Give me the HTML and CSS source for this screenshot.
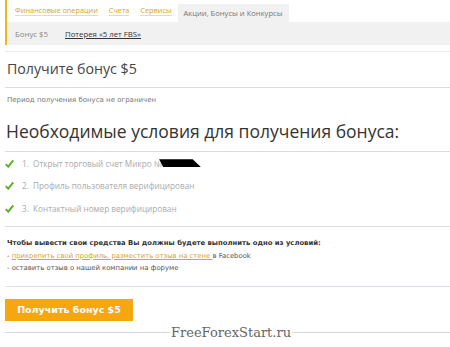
FILE: index.html
```html
<!DOCTYPE html>
<html>
<head>
  <meta charset="utf-8" />
  <title>Бонус $5</title>
  <link rel="stylesheet" href="styles.css">
</head>
<body>
<div class="page">
  <div class="nav">
    <div class="tabs">
      <a class="tab">Финансовые операции</a>
      <a class="tab">Счета</a>
      <a class="tab">Сервисы</a>
      <span class="tab active">Акции, Бонусы и Конкурсы</span>
    </div>
    <div class="subtabs">
      <span class="sub">Бонус $5</span>
      <a class="sub link">Потерея «5 лет FBS»</a>
    </div>
  </div>

  <div class="rule"></div>

  <h2 class="title">Получите бонус $5</h2>
  <p class="period">Период получения бонуса не ограничен</p>

  <h1 class="heading">Необходимые условия для получения бонуса:</h1>
  <ul class="conds">
    <li><svg class="check" viewBox="0 0 10 9"><path d="M0.8 5.2 L3.6 8 L9.2 1" /></svg>1.&nbsp;&nbsp;Открыт торговый счет Микро №<span class="redact"></span></li>
    <li><svg class="check" viewBox="0 0 10 9"><path d="M0.8 5.2 L3.6 8 L9.2 1" /></svg>2.&nbsp;&nbsp;Профиль пользователя верифицирован</li>
    <li><svg class="check" viewBox="0 0 10 9"><path d="M0.8 5.2 L3.6 8 L9.2 1" /></svg>3.&nbsp;&nbsp;Контактный номер верифицирован</li>
  </ul>

  <div class="withdraw">
    <b>Чтобы вывести свои средства Вы должны будете выполнить одно из условий:</b><br>
    - <a class="fb">прикрепить свой профиль, разместить отзыв на стене </a>в Facebook<br>
    - оставить отзыв о нашей компании на форуме
  </div>

  <div class="actions">
    <button class="btn">Получить бонус $5</button>
  </div>
  <div class="footer-rule"></div>
</div>
<div class="watermark">FreeForexStart.ru</div>
</body>
</html>
```

FILE: styles.css
```css
body {
  margin:0;
  padding:0;
  background:#fff;
  font-family:'DejaVu Sans', sans-serif;
  color:#444;
}

.page {
  padding-left:5px;
}

.nav {
  border-left:2px solid #f2b619;
}

.tabs {
  display:flex;
  align-items:flex-end;
  height:22px;
  padding-left:8px;
  gap:11px;
  font-family:'Open Sans', sans-serif;
}

.tab {
  font-size:7.3px;
  color:#d9a520;
  text-decoration:none;
  border-bottom:1px solid #f3dc8c;
  line-height:10px;
  margin-bottom:6px;
}

.tab.active {
  color:#777;
  border:0;
  background:#f1f1f1;
  margin:0;
  margin-left:-5px;
  padding:0 6px;
  height:18px;
  line-height:18px;
  font-size:7.6px;
}

.subtabs {
  display:flex;
  align-items:center;
  height:23px;
  background:#f1f1f1;
  padding-left:8px;
  gap:17px;
  font-family:'Open Sans', sans-serif;
  font-size:7.8px;
}

.sub {
  color:#888;
}

.sub.link {
  color:#333;
  text-decoration:underline;
}

.rule {
  margin-top:6px;
  border-top:1px solid #ececec;
}

h1, h2, p, ul {
  margin:0;
}

.title {
  font-family:'Open Sans', sans-serif;
  font-weight:normal;
  font-size:14.2px;
  color:#444;
  height:35px;
  line-height:34px;
  padding-left:2px;
  border-bottom:1px solid #dcdcdc;
}

.period {
  font-size:7px;
  color:#777;
  height:26px;
  line-height:25px;
  padding-left:2px;
}

.heading {
  font-family:'Open Sans', sans-serif;
  font-weight:normal;
  font-size:17.5px;
  color:#333;
  height:37px;
  line-height:34px;
  padding-left:1px;
  border-bottom:1px solid #dcdcdc;
}

.conds {
  list-style:none;
  padding:0;
  border-bottom:1px solid #dcdcdc;
  height:74px;
}

.conds li {
  display:flex;
  align-items:center;
  height:22.5px;
  font-family:'Open Sans', sans-serif;
  font-size:8.2px;
  color:#aaa;
}

.check {
  width:9px;
  height:9px;
  margin-right:8px;
  fill:none;
  stroke:#5fae2e;
  stroke-width:2.2;
}

.redact {
  display:inline-block;
  width:42px;
  height:8px;
  background:#000;
  margin-left:-3px;
  clip-path:polygon(0 0, 80% 0, 100% 100%, 10% 100%);
}

.withdraw {
  font-size:6.85px;
  color:#555;
  line-height:12.5px;
  padding:10px 2px 11px;
  border-bottom:1px solid #dfe4ea;
}

.withdraw b {
  color:#333;
}

.fb {
  color:#d9a520;
  text-decoration:underline;
}

.actions {
  padding:12px 0 11px;
}

.btn {
  display:block;
  width:128px;
  height:22px;
  border:0;
  background:#f6a70f;
  color:#fff;
  font-family:'DejaVu Sans', sans-serif;
  font-weight:bold;
  font-size:9.5px;
  padding:0;
  text-align:center;
}

.footer-rule {
  border-top:1px solid #d6dbe6;
}

.watermark {
  position:absolute;
  left:170px;
  top:325px;
  font-family:'DejaVu Serif', serif;
  font-size:13px;
  color:#666;
  background:#fff;
  padding:0 1px;
}
```
